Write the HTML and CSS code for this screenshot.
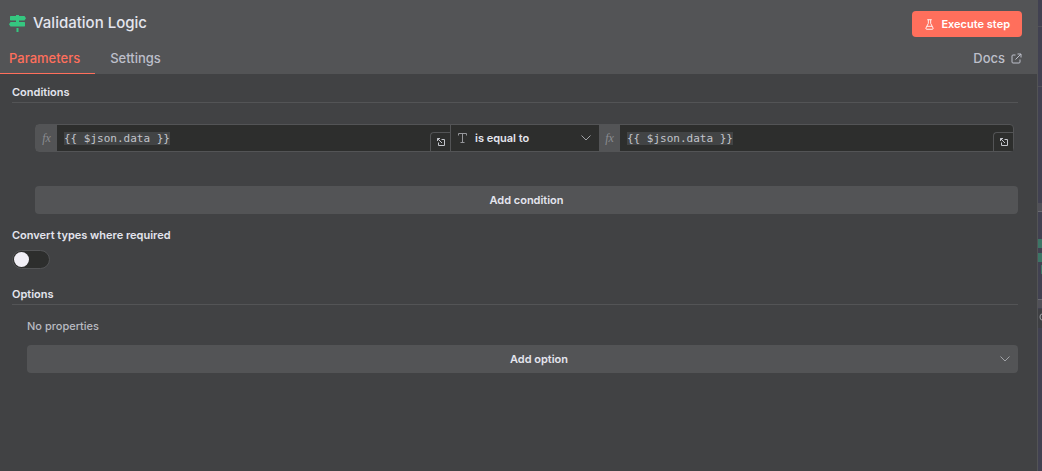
FILE: index.html
```html
<!DOCTYPE html>
<html lang="en">
<head>
<meta charset="utf-8">
<title>Validation Logic</title>
<link rel="stylesheet" href="styles.css">
</head>
<body>
<svg class="defs" aria-hidden="true">
  <symbol id="expand" viewBox="0 0 10 10"><path d="M1.500 1.500l4.500 4.500M1.500 4V1.500H4M5.500 2.500H8.500V8.500H2.500V5.500" fill="none" stroke="currentColor" stroke-width="1"/></symbol>
  <symbol id="chevron" viewBox="0 0 10 6"><path d="M.5 .5L5 5 9.500 .5" fill="none" stroke="currentColor"/></symbol>
</svg>
<div class="app">
  <main class="panel">
    <header class="header">
      <div class="title-row">
        <svg class="node-icon" viewBox="0 0 17 18" aria-hidden="true"><path fill="#35c780" d="M7 0h3v1h5.500L17 3.200 15.500 5.500H1.500L1 5V1.500L1.500 1H7zM7 5.500h3V7h5.500l.5.500V11l-.5.500h-14L0 9.200 1.500 7H7zM7.500 13h2v4h-2z"/></svg>
        <h1 class="title">Validation Logic</h1>
        <button class="execute" type="button">
          <svg class="flask" viewBox="0 0 10 12" fill="none" stroke="currentColor" aria-hidden="true"><path d="M2.500 .7h5M3.700 .7v4L1 10q-.4 1.300 1 1.300h6q1.400 0 1-1.300L6.300 4.700v-4M2 8h6"/></svg>
          Execute step
        </button>
      </div>
      <nav class="tabs">
        <a class="tab tab-active" href="#parameters">Parameters</a>
        <a class="tab" href="#settings">Settings</a>
        <a class="tab docs" href="#docs">Docs
          <svg class="external" viewBox="0 0 11 11" fill="none" stroke="currentColor" aria-hidden="true"><path d="M6.500 1H10v3.500M10 1L4.500 6.500M4.500 2H2q-1 0-1 1v6q0 1 1 1h6q1 0 1-1V6.500"/></svg>
        </a>
      </nav>
    </header>
    <div class="content" id="parameters">
      <h2 class="section-title">Conditions</h2>
      <div class="conditions">
        <div class="condition">
          <span class="fx">fx</span>
          <div class="expression">
            <input class="code" type="text" size="16" value="{{ $json.data }}" aria-label="First value">
            <button class="expand" type="button" aria-label="Open first editor"><svg class="expand-icon"><use href="#expand"/></svg></button>
          </div>
          <div class="operator">
            <svg class="type-icon" viewBox="0 0 9 10" fill="none" stroke="currentColor" aria-hidden="true"><path d="M.5 2.500v-2h8v2M4.500 .5v9M2.500 9.500h4"/></svg>
            <select class="select" aria-label="Operator"><option>is equal to</option><option>is not equal to</option></select>
            <svg class="chevron" aria-hidden="true"><use href="#chevron"/></svg>
          </div>
          <span class="fx">fx</span>
          <div class="expression">
            <input class="code" type="text" size="16" value="{{ $json.data }}" aria-label="Second value">
            <button class="expand" type="button" aria-label="Open second editor"><svg class="expand-icon"><use href="#expand"/></svg></button>
          </div>
        </div>
        <button class="add" type="button">Add condition</button>
      </div>
      <label class="toggle-label" for="convert">Convert types where required</label>
      <input class="toggle" id="convert" type="checkbox" role="switch">
      <h2 class="section-title">Options</h2>
      <div class="options">
        <p class="empty">No properties</p>
        <button class="add add-option" type="button">Add option<svg class="add-chevron" aria-hidden="true"><use href="#chevron"/></svg></button>
      </div>
    </div>
  </main>
  <aside class="canvas" aria-hidden="true">
    <svg class="canvas-art" viewBox="0 0 4 471" preserveAspectRatio="xMinYMin slice"><path fill="#505058" d="M0 26h4v1H0zM0 86h4v1H0zM0 203h4v8H0zM0 300h4v8H0z"/><path fill="#6a6a72" d="M0 211h4v1H0zM0 299h4v1H0z"/><path fill="#3c7566" d="M0 239h4v9H0zM0 253h4v9H0zM3 265h1v9H3z"/><path fill="#3e3f43" d="M0 309h4v19H0z"/><path fill="none" stroke="#a0a2a6" d="M4 314q-2 0-2 3t2 3"/></svg>
  </aside>
</div>
</body>
</html>
```
FILE: styles.css
```css
* { box-sizing: border-box; }
body {
  margin: 0;
  background: #414244;
  color: #e4e5ee;
  font-family: Inter, "Liberation Sans", sans-serif;
  font-size: 11px;
  line-height: 16px;
}
button, input, select { font: inherit; color: inherit; margin: 0; }
button { border: 0; padding: 0; cursor: pointer; }
h1, h2, p { margin: 0; }
.defs { display: none; }
.app { display: flex; min-height: 100vh; }
.panel { flex: 1; min-width: 0; border-right: 1px solid #535456; }
.canvas { width: 4px; overflow: hidden; background: #414151; }
.canvas-art { display: block; width: 4px; height: 471px; }

.header { background: #535456; }
.title-row { display: flex; align-items: center; padding: 11px 15px 0 9px; }
.node-icon { width: 17px; height: 18px; margin-right: 7px; }
.title { flex: 1; padding-bottom: 2px; font-size: 15px; font-weight: 500; line-height: 24px; }
.execute {
  display: flex;
  align-items: center;
  gap: 7px;
  height: 26px;
  padding: 0 12px 0 13px;
  border-radius: 4px;
  background: #ff6f5c;
  color: #fff;
  font-weight: 600;
}
.flask { width: 9px; height: 11px; }
.tabs { display: flex; gap: 15px; padding-right: 15px; }
.tab {
  padding: 12px 0 6px;
  border-bottom: 1px solid transparent;
  color: #bdbfca;
  font-size: 13px;
  font-weight: 500;
  line-height: 18px;
  text-decoration: none;
}
.tab-active { padding-left: 9px; padding-right: 15px; color: #ff6f5c; border-color: #ff6f5c; }
.docs { display: flex; align-items: center; gap: 6px; margin-left: auto; }
.external { width: 11px; height: 11px; }

.content { padding: 10px 19px 20px 12px; }
.section-title {
  padding-bottom: 2px;
  border-bottom: 1px solid #535456;
  font-size: 11px;
  font-weight: 600;
}
.conditions { padding: 21px 0 13px 23px; }
.condition {
  display: flex;
  height: 28px;
  margin: 0 4px 34px 0;
  border: 1px solid #535456;
  border-radius: 4px;
  background: #2d2e2d;
}
.fx {
  width: 21px;
  background: #535456;
  color: #8b8c90;
  font: italic 12px/26px "Liberation Serif", serif;
  text-align: center;
}
.expression { position: relative; flex: 1; min-width: 0; padding: 7px 7px 5px; }
.code {
  display: block;
  field-sizing: content;
  max-width: 100%;
  height: 13px;
  padding: 0;
  border: 0;
  background: #424445;
  color: #c3c5cb;
  font: 11px/13px "DejaVu Sans Mono", monospace;
}
.expand {
  position: absolute;
  right: 0;
  bottom: 0;
  display: grid;
  place-items: center;
  width: 20px;
  height: 19px;
  border: solid #535456;
  border-width: 1px 0 0 1px;
  border-radius: 4px 0 0 0;
  background: #2d2e2d;
  color: #c3c5cb;
}
.expand-icon { width: 10px; height: 10px; }
.operator {
  position: relative;
  display: flex;
  align-items: center;
  width: 149px;
  border-left: 1px solid #535456;
}
.type-icon { position: absolute; left: 7px; width: 9px; height: 10px; color: #96979b; pointer-events: none; }
.select {
  appearance: none;
  width: 100%;
  height: 26px;
  padding: 0 24px;
  border: 0;
  background: transparent;
  font-weight: 600;
}
.chevron { position: absolute; right: 8px; width: 10px; height: 6px; color: #a0a2a6; pointer-events: none; }
.add {
  position: relative;
  display: block;
  width: 100%;
  height: 28px;
  border-radius: 4px;
  background: #535456;
  font-weight: 600;
}
.add-option { padding-left: 33px; }
.add-chevron { position: absolute; right: 8px; top: 11px; width: 10px; height: 6px; color: #a0a2a6; }
.toggle-label { display: block; font-weight: 600; }
.toggle {
  appearance: none;
  display: flex;
  align-items: center;
  width: 38px;
  height: 19px;
  margin: 7px 0 17px;
  padding: 0 1px;
  border: 1px solid #535456;
  border-radius: 10px;
  background: #2d2e2d;
}
.toggle::before { content: ""; width: 15px; height: 15px; border-radius: 50%; background: #f1eff6; }
.toggle:checked { justify-content: flex-end; background: #35c780; }
.options { padding: 13px 0 0 15px; }
.empty { margin-bottom: 11px; color: #b9bbc2; font-weight: 500; }
```
